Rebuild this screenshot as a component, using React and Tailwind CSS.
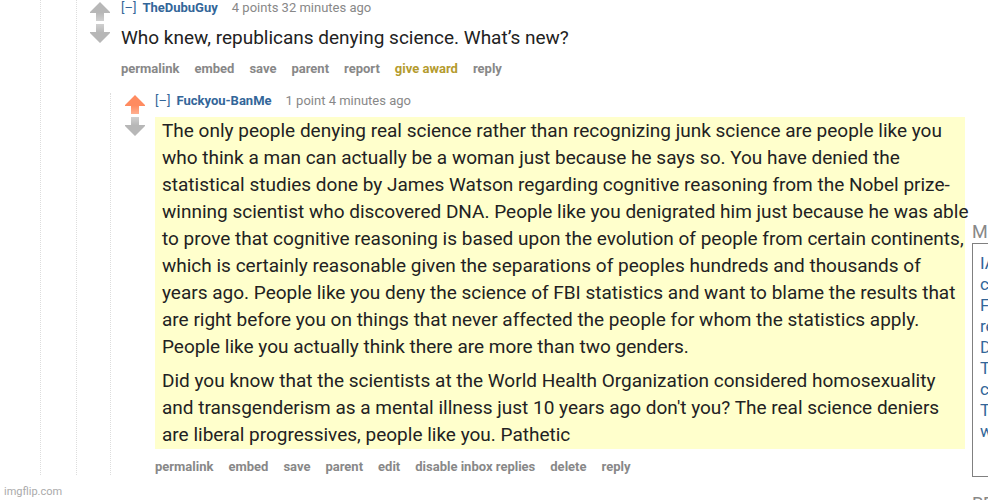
const sidebarLinks = ['IAmA', 'commons', 'Fact', 'rest', 'Data', 'The', 'code', 'Top', 'world'];

function Arrow({ down, voted }) {
    const id = `arrow-${down ? 'down' : 'up'}-${voted ? 'on' : 'off'}`;

    return (
        <svg viewBox="0 0 20 19" className={`block w-5 h-[19px] ${down ? 'rotate-180' : ''}`} aria-hidden="true">
            <defs>
                <linearGradient id={id} x1="0" y1="0" x2="0" y2="1">
                    <stop offset="0.55" stopColor={voted ? '#ff8b60' : '#b7b7b7'} />
                    <stop offset="1" stopColor={voted ? '#ffb091' : '#d0d0d0'} />
                </linearGradient>
            </defs>
            <path d="M10 0 L20 10 V11 H14 V19 H6 V11 H0 V10 Z" fill={`url(#${id})`} />
        </svg>
    );
}

function Votes({ upvoted }) {
    return (
        <div className="flex flex-col gap-[3px] w-5 shrink-0 pt-0.5">
            <button type="button" aria-label="upvote" aria-pressed={!!upvoted}>
                <Arrow voted={upvoted} />
            </button>
            <button type="button" aria-label="downvote">
                <Arrow down />
            </button>
        </div>
    );
}

function Tagline({ author, info }) {
    return (
        <div className="flex text-[13px] leading-4 whitespace-nowrap">
            <a href="#collapse" className="text-[#336699] mr-[6px]">[–]</a>
            <a href="#author" className="font-bold text-[#336699] mr-[14px]">{author}</a>
            <span className="text-[#888888]">{info}</span>
        </div>
    );
}

function Actions({ items }) {
    return (
        <ul className="flex gap-[15px] text-[13px] leading-4 font-bold text-[#888888] whitespace-nowrap">
            {items.map(item => (
                <li key={item}>
                    <a href="#action" className={item === 'give award' ? 'text-[#b49b2e]' : ''}>{item}</a>
                </li>
            ))}
        </ul>
    );
}

export default function App() {
    return (
        <div className="h-screen overflow-hidden flex bg-white font-['Roboto',sans-serif] text-[#222222]">
            <div className="flex flex-col flex-1 min-w-0">
                <main className="pl-10">
                    <div className="border-l border-dotted border-[#dddddd] pl-[35px]">
                        <div className="border-l border-dotted border-[#dddddd] pl-[13px]">
                            <article className="flex gap-[11px]">
                                <Votes />
                                <div>
                                    <Tagline author="TheDubuGuy" info="4 points 32 minutes ago" />
                                    <p className="mt-2 text-[19px] leading-[27px] whitespace-nowrap">
                                        Who knew, republicans denying science. What’s new?
                                    </p>
                                    <div className="mt-[10px]">
                                        <Actions items={['permalink', 'embed', 'save', 'parent', 'report', 'give award', 'reply']} />
                                    </div>
                                </div>
                            </article>

                            <article className="ml-5 mt-4 border-l border-dotted border-[#dddddd] pl-[14px] flex gap-[10px]">
                                <Votes upvoted />
                                <div className="flex-1 min-w-0">
                                    <Tagline author="Fuckyou-BanMe" info="1 point 4 minutes ago" />
                                    <div className="mt-2 bg-[#ffffcc] pl-[7px] pb-px text-[19px] leading-[27px] whitespace-nowrap flex flex-col gap-[7px]">
                                        <p>
                                            The only people denying real science rather than recognizing junk science are people like you<br />
                                            who think a man can actually be a woman just because he says so. You have denied the<br />
                                            statistical studies done by James Watson regarding cognitive reasoning from the Nobel prize-<br />
                                            winning scientist who discovered DNA. People like you denigrated him just because he was able<br />
                                            to prove that cognitive reasoning is based upon the evolution of people from certain continents,<br />
                                            which is certainly reasonable given the separations of peoples hundreds and thousands of<br />
                                            years ago. People like you deny the science of FBI statistics and want to blame the results that<br />
                                            are right before you on things that never affected the people for whom the statistics apply.<br />
                                            People like you actually think there are more than two genders.
                                        </p>
                                        <p>
                                            Did you know that the scientists at the World Health Organization considered homosexuality<br />
                                            and transgenderism as a mental illness just 10 years ago don't you? The real science deniers<br />
                                            are liberal progressives, people like you. Pathetic
                                        </p>
                                    </div>
                                    <div className="mt-[10px]">
                                        <Actions items={['permalink', 'embed', 'save', 'parent', 'edit', 'disable inbox replies', 'delete', 'reply']} />
                                    </div>
                                </div>
                            </article>
                        </div>
                    </div>
                </main>
                <footer className="mt-auto px-1 pb-px text-[11px] leading-[14px] text-[#aaaaaa]">imgflip.com</footer>
            </div>

            <aside className="w-4 ml-[7px] shrink-0 overflow-hidden pt-[221px]">
                <h2 className="text-[18px] leading-[22px] text-[#888888] whitespace-nowrap">MODERATORS</h2>
                <ul className="w-[300px] h-[234px] border border-[#808080] pt-[9px] pl-[7px] text-[17px] leading-[21px] text-[#336699]">
                    {sidebarLinks.map(link => (
                        <li key={link}><a href="#link">{link}</a></li>
                    ))}
                </ul>
                <h2 className="mt-4 text-[18px] leading-[22px] text-[#888888] whitespace-nowrap">RECENT</h2>
            </aside>
        </div>
    );
}
